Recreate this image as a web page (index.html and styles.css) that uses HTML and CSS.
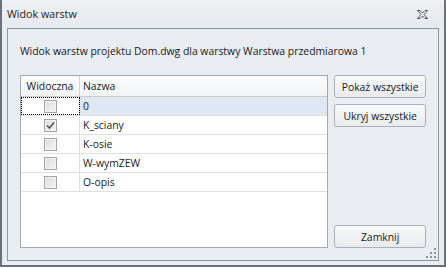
FILE: index.html
```html
<!DOCTYPE html>
<html lang="pl">
<head>
    <meta charset="UTF-8">
    <title>Widok warstw</title>
    <link rel="stylesheet" href="styles.css">
</head>
<body>
    <div class="window">
        <div class="titlebar">
            <span class="title">Widok warstw</span>
            <svg class="close" width="11" height="9" viewBox="0 0 11 9">
                <path d="M0.5 0.5 H3 L5.5 3 L8 0.5 H10.5 L7 4.5 L10.5 8.5 H8 L5.5 6 L3 8.5 H0.5 L4 4.5 Z" fill="#fff" stroke="#4a4d52" stroke-width="1"/>
            </svg>
        </div>
        <div class="panel">
            <p class="info">Widok warstw projektu Dom.dwg dla warstwy Warstwa przedmiarowa 1</p>
            <div class="content">
                <div class="grid">
                    <div class="grid-head">
                        <div class="col-vis">Widoczna</div>
                        <div class="col-name">Nazwa</div>
                    </div>
                    <div class="grid-row selected">
                        <div class="col-vis focus"><span class="check"></span></div>
                        <div class="col-name">0</div>
                    </div>
                    <div class="grid-row">
                        <div class="col-vis"><span class="check checked">
                            <svg width="9" height="9" viewBox="0 0 9 9"><path d="M1 4.5 L3.5 7 L8 1.5" fill="none" stroke="#555" stroke-width="1.6"/></svg>
                        </span></div>
                        <div class="col-name">K_sciany</div>
                    </div>
                    <div class="grid-row">
                        <div class="col-vis"><span class="check"></span></div>
                        <div class="col-name">K-osie</div>
                    </div>
                    <div class="grid-row">
                        <div class="col-vis"><span class="check"></span></div>
                        <div class="col-name">W-wymZEW</div>
                    </div>
                    <div class="grid-row">
                        <div class="col-vis"><span class="check"></span></div>
                        <div class="col-name">O-opis</div>
                    </div>
                </div>
                <div class="actions">
                    <button type="button">Pokaż wszystkie</button>
                    <button type="button">Ukryj wszystkie</button>
                    <button type="button" class="close-btn">Zamknij</button>
                </div>
            </div>
            <div class="grip">
                <i style="right:2px;bottom:2px"></i>
                <i style="right:6px;bottom:2px"></i>
                <i style="right:10px;bottom:2px"></i>
                <i style="right:2px;bottom:6px"></i>
                <i style="right:6px;bottom:6px"></i>
                <i style="right:2px;bottom:10px"></i>
            </div>
        </div>
    </div>
</body>
</html>
```

FILE: styles.css
```css
body {
    margin: 0;
    background-color: #fff;
    font-family: "Open Sans", "Noto Sans", sans-serif;
    font-size: 10.4px;
    color: #1a1a1a;
}
.window {
    width: 446px;
    height: 267px;
    box-sizing: border-box;
    border-left: 2px solid #6b7179;
    border-right: 2px solid #6b7179;
    border-bottom: 2px solid #6b7179;
    background-color: #e9ecf0;
    display: flex;
    flex-direction: column;
}
.titlebar {
    height: 28px;
    flex-shrink: 0;
    display: flex;
    align-items: center;
    justify-content: space-between;
    padding: 0 16px 0 5px;
    background: linear-gradient(#eef0f3, #e6e9ed);
}
.title {
    font-size: 10.7px;
    color: #1e1e1e;
    margin-top: -1px;
}
.close {
    display: block;
    margin-top: 1px;
}
.panel {
    position: relative;
    height: 233px;
    margin: 0 5px;
    box-sizing: border-box;
    border: 1px solid #8e949b;
    background-color: #e9ecf0;
    padding: 14px 12px 12px 12px;
    display: flex;
    flex-direction: column;
}
.info {
    margin: 0 0 16px 0;
    height: 16px;
    line-height: 16px;
}
.content {
    flex: 1;
    display: flex;
    gap: 6px;
}
.grid {
    width: 309px;
    box-sizing: border-box;
    border: 1px solid #a3a8ae;
    background-color: #fff;
}
.grid-head {
    display: flex;
    height: 21px;
    box-sizing: border-box;
    border-bottom: 1px solid #c9cdd2;
    background: linear-gradient(#fcfcfd, #f2f3f5);
    line-height: 20px;
}
.grid-row {
    display: flex;
    height: 19px;
    box-sizing: border-box;
    border-bottom: 1px solid #dedfe1;
    line-height: 18px;
}
.col-vis {
    width: 59px;
    box-sizing: border-box;
    border-right: 1px solid #dcdee1;
    display: flex;
    align-items: center;
    justify-content: center;
}
.grid-head .col-vis {
    border-right-color: #d2d5d9;
}
.col-name {
    flex: 1;
    padding-left: 3px;
}
.selected .col-name {
    background-color: #dee7f2;
}
.col-vis.focus {
    outline: 1px dotted #000;
    outline-offset: -1px;
}
.check {
    width: 13px;
    height: 13px;
    box-sizing: border-box;
    border: 1px solid #a4a4a4;
    background: linear-gradient(135deg, #dcdcdc, #f4f4f4);
    box-shadow: inset 0 0 0 1px #f2f2f2;
    display: flex;
    align-items: center;
    justify-content: center;
}
.actions {
    width: 92px;
    display: flex;
    flex-direction: column;
    gap: 6px;
}
.actions button {
    height: 23px;
    padding: 0;
    border: 1px solid #acb1b7;
    border-radius: 3px;
    background: linear-gradient(#f8f9fa, #e8eaed);
    font-family: inherit;
    font-size: 10.4px;
    color: #1a1a1a;
}
.actions .close-btn {
    margin-top: auto;
}
.grip {
    position: absolute;
    right: 0;
    bottom: 0;
    width: 14px;
    height: 14px;
}
.grip i {
    position: absolute;
    width: 2px;
    height: 2px;
    background-color: #8d9299;
}
```
